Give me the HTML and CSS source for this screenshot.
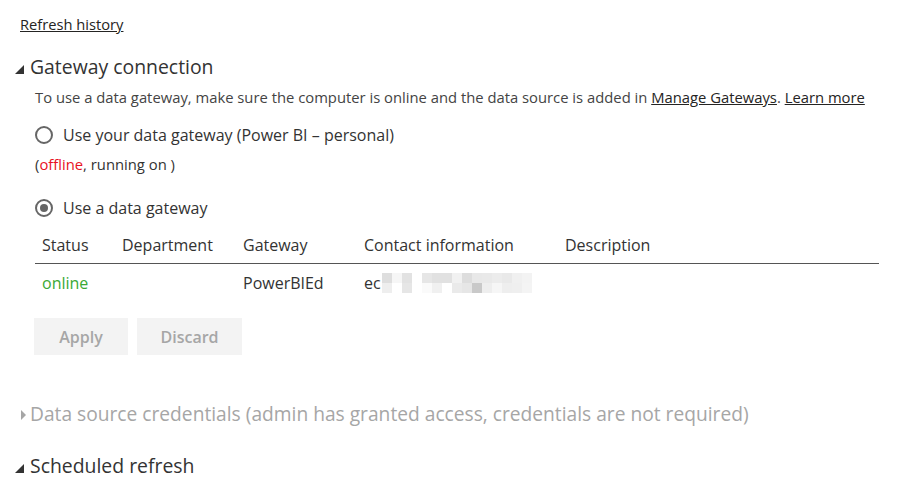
FILE: index.html
```html
<!DOCTYPE html>
<html>
<head>
    <meta charset="UTF-8" />
    <title>Dataset settings</title>
    <link rel="stylesheet" href="styles.css">
</head>
<body>

<a class="history" href="#">Refresh history</a>

<div class="section">
    <h2 class="section-title"><span class="arrow open"></span>Gateway connection</h2>
    <div class="section-body">
        <p class="desc">To use a data gateway, make sure the computer is online and the data source is added in <a href="#">Manage Gateways</a>. <a href="#">Learn more</a></p>

        <label class="radio"><span class="dot"></span>Use your data gateway (Power BI – personal)</label>
        <p class="status-note">(<span class="offline">offline</span>, running on )</p>

        <label class="radio"><span class="dot checked"></span>Use a data gateway</label>

        <table class="gateways">
            <tr class="head"><td class="c1">Status</td><td class="c2">Department</td><td class="c3">Gateway</td><td class="c4">Contact information</td><td>Description</td></tr>
            <tr class="row">
                <td class="online">online</td>
                <td></td>
                <td>PowerBIEd</td>
                <td><span class="contact">ec<span class="blur">
                    <i style="background:#dedede"></i><i style="background:#f6f6f6"></i><i style="background:#e2e2e2"></i><i></i><i style="background:#e6e6e6"></i><i style="background:#e1e1e1"></i><i style="background:#e1e1e1"></i><i style="background:#f1f1f1"></i><i style="background:#dddddd"></i><i style="background:#e8e8e8"></i><i style="background:#e9e9e9"></i><i style="background:#ececec"></i><i style="background:#e9e9e9"></i><i style="background:#f0f0f0"></i><i style="background:#f3f3f3"></i>
                    <i style="background:#eeeeee"></i><i></i><i style="background:#e6e6e6"></i><i></i><i style="background:#fafafa"></i><i style="background:#f0f0f0"></i><i></i><i style="background:#eaeaea"></i><i style="background:#e6e6e6"></i><i style="background:#c9c9c9"></i><i style="background:#eeeeee"></i><i style="background:#f6f6f6"></i><i style="background:#eeeeee"></i><i style="background:#efefef"></i><i style="background:#f4f4f4"></i>
                </span></span></td>
                <td></td>
            </tr>
        </table>

        <div class="buttons">
            <button class="btn apply" disabled>Apply</button>
            <button class="btn discard" disabled>Discard</button>
        </div>
    </div>
</div>

<div class="section">
    <h2 class="section-title disabled"><span class="arrow closed"></span>Data source credentials (admin has granted access, credentials are not required)</h2>
</div>

<div class="section">
    <h2 class="section-title"><span class="arrow open"></span>Scheduled refresh</h2>
</div>

</body>
</html>
```

FILE: styles.css
```css
body {
    margin: 0;
    padding: 14px 0 0 20px;
    font-family: "Open Sans", "Noto Sans", sans-serif;
    font-size: 14.8px;
    color: #333;
    background: #fff;
}

a {
    color: #252423;
    text-decoration: underline;
}

.history {
    display: inline-block;
    line-height: 20px;
    font-size: 14.7px;
    color: #252423;
}

.section-title {
    margin: 0;
    font-size: 19.4px;
    font-weight: normal;
    line-height: 28px;
    color: #333;
    display: flex;
    align-items: center;
}
.section-title.disabled {
    color: #a6a6a6;
    font-size: 19.2px;
}

.arrow {
    display: inline-block;
    width: 0;
    height: 0;
    margin-right: 6px;
}
.arrow.open {
    margin-left: -5px;
    border-left: 9px solid transparent;
    border-bottom: 9px solid #333;
    margin-top: 4px;
}
.arrow.closed {
    margin-left: 1px;
    margin-right: 4px;
    border-top: 5px solid transparent;
    border-bottom: 5px solid transparent;
    border-left: 5px solid #a6a6a6;
    margin-top: 2px;
}

.section:nth-of-type(1) .section-title { margin-top: 19px; }

.section-body {
    padding-left: 15px;
}

.desc {
    margin: 6px 0 0;
    line-height: 20px;
    color: #444;
}

.radio {
    display: flex;
    align-items: center;
    height: 24px;
    margin-top: 16px;
    font-size: 16px;
    color: #333;
}

.dot {
    box-sizing: border-box;
    width: 18px;
    height: 18px;
    border: 2px solid #666;
    border-radius: 50%;
    margin-right: 10px;
    position: relative;
}
.dot.checked::after {
    content: "";
    position: absolute;
    left: 3px;
    top: 3px;
    width: 8px;
    height: 8px;
    border-radius: 50%;
    background: #666;
}

.status-note {
    margin: 7px 0 0;
    line-height: 20px;
    color: #333;
}
.offline {
    color: #e81123;
}

.status-note + .radio {
    margin-top: 22px;
}

.gateways {
    width: 844px;
    margin-top: 8px;
    border-collapse: collapse;
    font-size: 16px;
}
.gateways td {
    padding: 0 0 0 7px;
    text-align: left;
    white-space: nowrap;
}
.gateways .head td {
    height: 34px;
    border-bottom: 1px solid #555;
    padding-bottom: 1px;
}
.gateways .row td {
    height: 38px;
}
.c1 { width: 73px; }
.c2 { width: 114px; }
.c3 { width: 114px; }
.c4 { width: 194px; }

.online {
    color: #3aa935;
}

.contact {
    display: inline-flex;
    align-items: center;
}
.blur {
    display: grid;
    grid-template-columns: repeat(15, 10px);
    grid-auto-rows: 10px;
    margin-left: 1px;
}
.blur i {
    display: block;
    background: #fff;
}

.buttons {
    display: flex;
    gap: 9px;
    margin-top: 16px;
}
.btn {
    height: 37px;
    border: none;
    background: #f3f3f3;
    color: #a6a6a6;
    font-family: inherit;
    font-size: 16px;
    font-weight: 600;
    padding: 0;
}
.apply { width: 94px; margin-left: -1px; }
.discard { width: 105px; }

.section:nth-of-type(2) .section-title { margin-top: 45px; }
.section:nth-of-type(3) .section-title { margin-top: 24px; }
```
